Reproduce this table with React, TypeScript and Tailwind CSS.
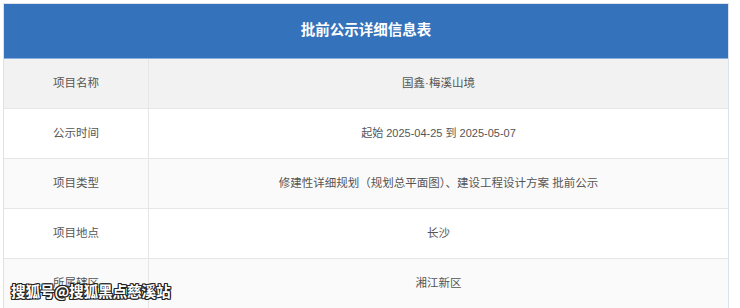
import React from 'react';

const rows = [
  { label: '项目名称', value: '国鑫·梅溪山境', bg: 'bg-[#f2f2f2]', size: 'text-[11.5px]' },
  { label: '公示时间', value: '起始 2025-04-25 到 2025-05-07', bg: 'bg-white', size: 'text-[11px]' },
  { label: '项目类型', value: '修建性详细规划（规划总平面图）、建设工程设计方案 批前公示', bg: 'bg-[#fafafa]', size: 'text-[11.5px]' },
  { label: '项目地点', value: '长沙', bg: 'bg-white', size: 'text-[11.5px]' },
  { label: '所属辖区', value: '湘江新区', bg: 'bg-[#fafafa]', size: 'text-[11.5px]' },
];

const App: React.FC = () => {
  return (
    <div className="relative w-[740px] h-[308px] overflow-hidden bg-white font-['Liberation_Sans','Noto_Sans_CJK_SC',sans-serif]">
      <div className="ml-[3px] mt-[3px] w-[726px] border border-[#dde3ea]">
        <div className="h-[55px] flex items-center justify-center bg-[#3473bb] border-b border-[#8eb0dc] text-white font-bold text-[14.5px]">
          批前公示详细信息表
        </div>
        {rows.map((r) => (
          <div key={r.label} className={`grid grid-cols-[145px_1fr] h-[50px] border-b border-[#e6e6e6] ${r.bg}`}>
            <div className="flex items-center justify-center border-r border-[#e6e6e6] text-[11.5px] text-[#555]">
              {r.label}
            </div>
            <div className={`flex items-center justify-center text-[#555] ${r.size}`}>
              {r.value}
            </div>
          </div>
        ))}
      </div>
      {/* watermark over the last row */}
      <div className="absolute left-[11px] top-[280px] font-['Noto_Sans_CJK_SC',sans-serif] text-[14.7px] font-bold text-white tracking-[-0.2px] [text-shadow:1px_0_#222,-1px_0_#222,0_1px_#222,0_-1px_#222,1px_1px_#222,-1px_-1px_#222,1px_-1px_#222,-1px_1px_#222]">
        搜狐号@搜狐黑点慈溪站
      </div>
    </div>
  );
};

export default App;
